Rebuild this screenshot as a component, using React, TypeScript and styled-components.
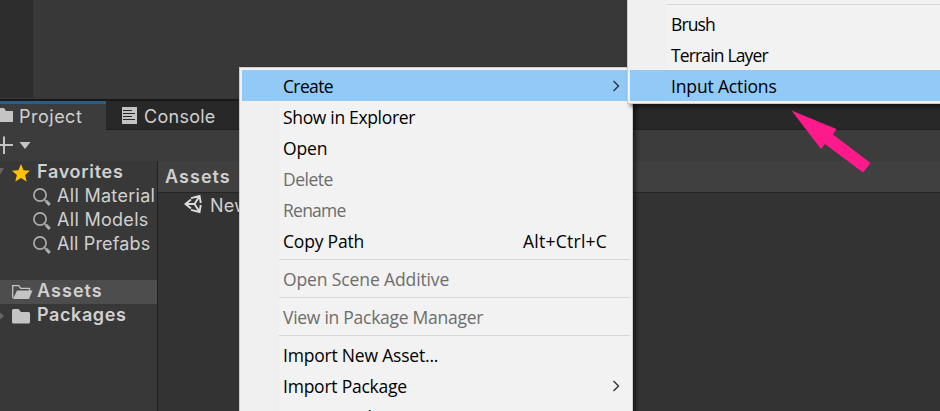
import React from "react";
import styled, { createGlobalStyle } from "styled-components";

const Global = createGlobalStyle`
  * { box-sizing: border-box; }
  html, body { margin: 0; background: #333; overflow: hidden; }
`;

const Editor = styled.div`
  position: relative;
  width: 940px;
  height: 411px;
  overflow: hidden;
  display: flex;
  flex-direction: column;
  background: #333;
  color: #d0d0d0;
  font: 18px/24px Inter, sans-serif;
  letter-spacing: 0.3px;
  white-space: nowrap;
`;
const UpperDock = styled.div`
  display: flex;
  flex: 0 0 99px;
  background: #383838;
`;
const UpperGutter = styled.div`
  width: 33px;
  height: 98px;
  background: #2d2d2d;
`;
const TabBar = styled.div`
  display: flex;
  flex: 0 0 31px;
  background: #282828;
  border-top: 2px solid #191919;
`;
const Tab = styled.div<{ $active?: boolean }>`
  display: flex;
  align-items: center;
  gap: ${(p) => (p.$active ? 6 : 7)}px;
  width: ${(p) => (p.$active ? 106 : 134)}px;
  padding-left: ${(p) => (p.$active ? 0 : 16)}px;
  padding-top: ${(p) => (p.$active ? 3 : 4)}px;
  background: ${(p) => (p.$active ? "#3c3c3c" : "transparent")};
  box-shadow: ${(p) => (p.$active ? "inset 0 3px #2c5d87" : "none")};
  letter-spacing: ${(p) => (p.$active ? 0.5 : 0.27)}px;
  & > svg { margin-top: -4px; }
`;
const TabRule = styled.div`
  flex: 1;
  display: flex;
  border-bottom: 1px solid #1f1f1f;
`;
const Toolbar = styled.div`
  flex: 0 0 31px;
  display: flex;
  align-items: center;
  background: #3c3c3c;
`;
const Body = styled.div`
  flex: 1;
  display: flex;
  min-height: 0;
`;
const Tree = styled.div`
  width: 158px;
  background: #383838;
  border-right: 1px solid #202020;
  overflow: hidden;
`;
const TreeRow = styled.div<{ $child?: boolean; $selected?: boolean; $track?: number }>`
  display: flex;
  align-items: center;
  height: 24px;
  padding-bottom: 2px;
  padding-left: ${(p) => (p.$child ? 32 : 0)}px;
  gap: ${(p) => (p.$child ? 6 : 0)}px;
  font-weight: ${(p) => (p.$child ? 400 : 600)};
  letter-spacing: ${(p) => p.$track ?? 0.3}px;
  background: ${(p) => (p.$selected ? "#4d4d4d" : "transparent")};
  & > svg {
    flex: none;
    margin-top: ${(p) => (p.$child ? 1 : 2)}px;
  }
`;
const TreeTop = styled.div`
  height: 119px;
`;
const Content = styled.div`
  flex: 1;
`;
const Breadcrumb = styled.div`
  height: 32px;
  padding: 4px 0 0 7px;
  background: #404040;
  border-bottom: 1px solid #242424;
  font-weight: 600;
  letter-spacing: 1.05px;
`;
const FileRow = styled.div`
  display: flex;
  align-items: center;
  height: 25px;
  padding-left: 26px;
  gap: 7px;
  & > svg { margin-top: -3px; }
`;

const Menu = styled.div<{ $sub?: boolean }>`
  position: absolute;
  left: ${(p) => (p.$sub ? 627 : 239)}px;
  top: ${(p) => (p.$sub ? -33 : 67)}px;
  width: ${(p) => (p.$sub ? 330 : 394)}px;
  height: ${(p) => (p.$sub ? 137 : 370)}px;
  padding: 2px;
  border: 1px solid #ccc;
  background: linear-gradient(90deg, #f0f0f0 39px, #f2f2f2 39px);
  box-shadow: 3px 3px 4px rgba(0, 0, 0, 0.5);
  font: 17.5px/31px "Open Sans", sans-serif;
`;
const MenuRow = styled.div<{ $hot?: boolean; $off?: boolean }>`
  display: flex;
  align-items: center;
  height: 31px;
  padding: 1px 10px 0 41px;
  background: ${(p) => (p.$hot ? "#91c9f7" : "transparent")};
  color: ${(p) => (p.$off ? "#6d6d6d" : "#000")};
`;
const Label = styled.span<{ $track?: number }>`
  flex: 1;
  letter-spacing: ${(p) => p.$track ?? 0}px;
`;
const Shortcut = styled.span`
  width: 97px;
  letter-spacing: 0.25px;
`;
const Separator = styled.div`
  height: 7px;
  margin-left: 37px;
  padding-top: 3px;
  &::before {
    content: "";
    display: block;
    height: 1px;
    background: #d7d7d7;
  }
`;
const SubSpacer = styled.div`
  height: 31px;
`;
const Pointer = styled.svg`
  position: absolute;
  left: 788px;
  top: 106px;
`;

const Chevron = () => (
  <svg width="8" height="12" viewBox="0 0 8 12" fill="none" stroke="#333" strokeWidth="1.4">
    <path d="M1.500 1 6.500 6l-5 5" />
  </svg>
);
const Magnifier = () => (
  <svg width="19" height="20" viewBox="0 0 19 20" fill="none" stroke="#acacac">
    <circle cx="8" cy="8" r="6.100" strokeWidth="1.700" />
    <path d="m12.200 12.200 2 2" strokeWidth="1.500" />
    <path d="m14 14 3.800 4" strokeWidth="3.200" />
  </svg>
);

const searches = [
  { name: "All Material", track: 0.3 },
  { name: "All Models", track: 0.3 },
  { name: "All Prefabs", track: 0.15 },
];

type Item = { text: string; hot?: boolean; off?: boolean; more?: boolean; keys?: string; track?: number } | null;
const items: Item[] = [
  { text: "Create", hot: true, more: true, track: -0.65 },
  { text: "Show in Explorer", track: -0.33 },
  { text: "Open", track: -0.15 },
  { text: "Delete", off: true, track: -0.5 },
  { text: "Rename", off: true, track: -0.75 },
  { text: "Copy Path", keys: "Alt+Ctrl+C", track: -0.2 },
  null,
  { text: "Open Scene Additive", off: true, track: -0.12 },
  null,
  { text: "View in Package Manager", off: true, track: -0.27 },
  null,
  { text: "Import New Asset...", track: -0.2 },
  { text: "Import Package", more: true, track: -0.23 },
  { text: "Export Package...", track: -0.23 },
];
const subItems: Item[] = [
  null,
  { text: "Brush", track: -0.9 },
  { text: "Terrain Layer", track: -0.85 },
  { text: "Input Actions", hot: true, track: -0.15 },
];

const MenuItems = ({ list }: { list: Item[] }) => (
  <>
    {list.map((it, i) =>
      it ? (
        <MenuRow key={i} $hot={it.hot} $off={it.off}>
          <Label $track={it.track}>{it.text}</Label>
          {it.keys && <Shortcut>{it.keys}</Shortcut>}
          {it.more && <Chevron />}
        </MenuRow>
      ) : (
        <Separator key={i} />
      )
    )}
  </>
);

export default function App() {
  return (
    <Editor>
      <Global />
      <UpperDock>
        <UpperGutter />
      </UpperDock>
      <TabBar>
        <Tab $active>
          <svg width="13" height="16" viewBox="0 0 13 16" fill="#c4c4c4">
            <path d="M0 1h4l2 3h7v11H0z" />
          </svg>
          Project
        </Tab>
        <TabRule>
          <Tab>
            <svg width="15" height="17" viewBox="0 0 15 17">
              <path d="M0 0h15v17H0z" fill="#c4c4c4" />
              <path d="M1 3.500h9M1 6.500h12M1 9.500h9M1 12.500h12" stroke="#282828" />
            </svg>
            Console
          </Tab>
        </TabRule>
      </TabBar>
      <Toolbar>
        <svg width="32" height="20" viewBox="0 0 32 20">
          <path d="M0 9h13M4 .5v17.500" stroke="#c4c4c4" strokeWidth="2" />
          <path d="M19.500 6h11l-5.500 7z" fill="#c4c4c4" />
        </svg>
      </Toolbar>
      <Body>
        <Tree>
          <TreeTop>
            <TreeRow $track={0.7}>
              <svg width="37" height="24" viewBox="0 0 37 24">
                <path d="M-5 7h9l-4.500 8z" fill="#666" />
                <path d="m21 3 2.600 6.200 6.400.5-4.900 4.400 1.600 6.400-5.700-3.500-5.700 3.500 1.600-6.400L12 9.700l6.400-.5z" fill="#ffc107" />
              </svg>
              Favorites
            </TreeRow>
            {searches.map((s) => (
              <TreeRow key={s.name} $child $track={s.track}>
                <Magnifier />
                {s.name}
              </TreeRow>
            ))}
          </TreeTop>
          <TreeRow $selected $track={1.05}>
            <svg width="37" height="24" viewBox="0 0 37 24">
              <path d="M12.700 18V5.700h6l2 2.600h8.800v3" fill="none" stroke="#c4c4c4" strokeWidth="1.300" />
              <path d="M17 10.500h15.500L29 19H13z" fill="#c4c4c4" />
            </svg>
            Assets
          </TreeRow>
          <TreeRow $track={0.6}>
            <svg width="37" height="24" viewBox="0 0 37 24">
              <path d="m0 8.500 4 3.500-4 3.500z" fill="#666" />
              <path d="M12 6.500q0-1.500 1.500-1.500h5l2.500 3h7.500q1.500 0 1.500 1.500V18q0 1.500-1.500 1.500h-15Q12 19.500 12 18z" fill="#c4c4c4" />
            </svg>
            Packages
          </TreeRow>
        </Tree>
        <Content>
          <Breadcrumb>Assets</Breadcrumb>
          <FileRow>
            <svg width="19" height="20" viewBox="0 0 19 20" fill="none" stroke="#dcdcdc" strokeWidth="1.900">
              <path d="M7 5.500 1.500 10 7 14.500M2 10h8.500l4.500-7M10.500 10l4.500 7M7 4.200 15.500 2l1.300 7M7 15.800l8.500 2.200 1.300-7" />
            </svg>
            New
          </FileRow>
        </Content>
      </Body>
      <Menu>
        <MenuItems list={items} />
      </Menu>
      <Menu $sub>
        <SubSpacer />
        <MenuItems list={subItems} />
      </Menu>
      <Pointer width="90" height="70" viewBox="788 106 90 70">
        <path d="M791.500 110.500 836.500 129l-3.500 5.500 37.500 28.500-7.500 9.500-38-28.500-4 5z" fill="#ff1a8c" />
      </Pointer>
    </Editor>
  );
}
